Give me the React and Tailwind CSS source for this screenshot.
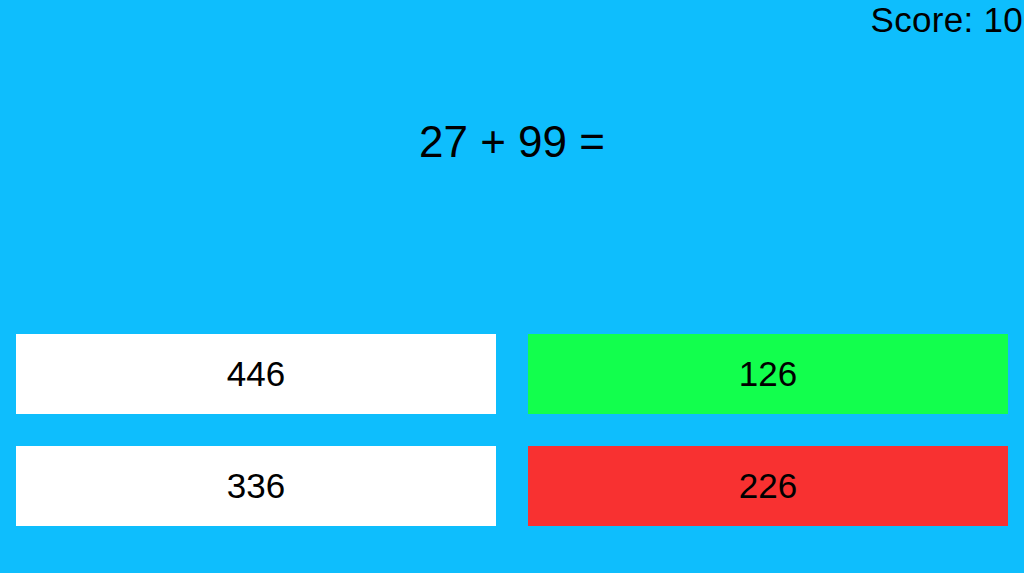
export default function App() {
  const font = { fontFamily: '"Liberation Sans", Arial, sans-serif' };
  return (
    <div className="w-full h-[573px] bg-[#0ebefd] flex flex-col text-black overflow-hidden" style={font}>
      <div className="flex justify-end pr-[1px] pt-[2px] text-[35px] leading-none tracking-[0.3px]">Score: 10</div>
      <div className="mt-[83px] flex justify-center text-[44px] leading-none">27 + 99 =</div>
      <div className="mt-auto mb-[47px] px-4 grid grid-cols-2 gap-8">
        <button className="h-20 bg-white flex items-center justify-center text-[35px]">446</button>
        <button className="h-20 bg-[#12ff4d] flex items-center justify-center text-[35px]">126</button>
        <button className="h-20 bg-white flex items-center justify-center text-[35px]">336</button>
        <button className="h-20 bg-[#f83131] flex items-center justify-center text-[35px]">226</button>
      </div>
    </div>
  );
}
